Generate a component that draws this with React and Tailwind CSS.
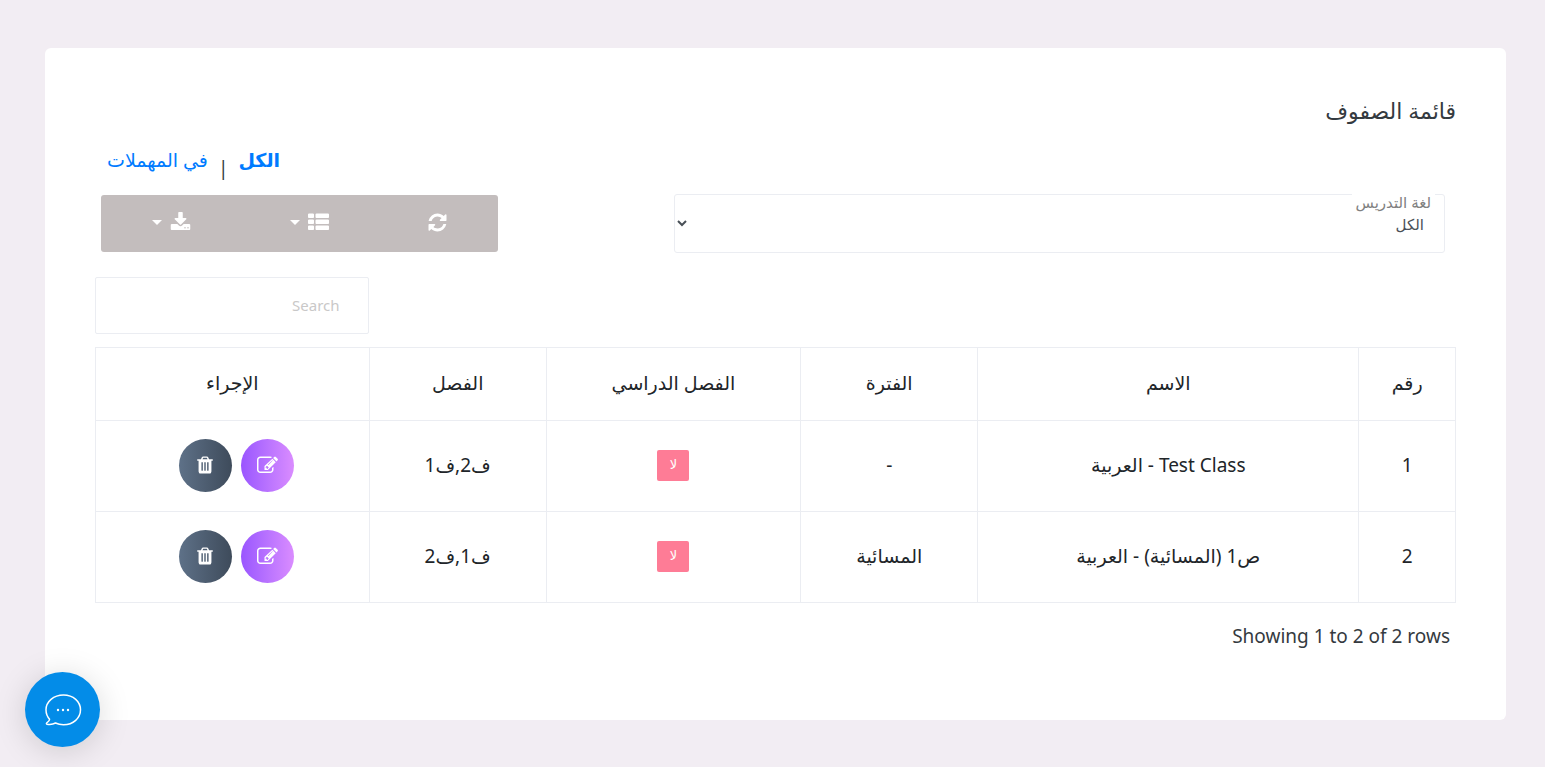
import React, { useState } from 'react';

const classes = [
  { no: 1, name: 'Test Class - العربية', shift: '-', semester: 'لا', section: 'ف2,ف1' },
  { no: 2, name: 'ص1 (المسائية) - العربية', shift: 'المسائية', semester: 'لا', section: 'ف1,ف2' },
];

const columns = [
  { label: 'رقم', width: 'w-[7.1%]' },
  { label: 'الاسم', width: 'w-[28%]' },
  { label: 'الفترة', width: 'w-[13%]' },
  { label: 'الفصل الدراسي', width: 'w-[18.7%]' },
  { label: 'الفصل', width: 'w-[13%]' },
  { label: 'الإجراء', width: 'w-[20.1%]' },
];

const icons = {
  refresh:
    'M1639 1056q0 5-1 7-64 268-268 434.500T892 1664q-146 0-282.500-55T366 1452l-129 129q-19 19-45 19t-45-19-19-45v-448q0-26 19-45t45-19h448q26 0 45 19t19 45-19 45l-137 137q71 66 161 102t187 36q134 0 250-65t186-179q11-17 53-117 8-23 30-23h192q13 0 22.500 9.500t9.500 22.500zm25-800v448q0 26-19 45t-45 19h-448q-26 0-45-19t-19-45 19-45l138-138Q1097 384 896 384q-134 0-250 65T460 628q-11 17-53 117-8 23-30 23H178q-13 0-22.500-9.500T146 736v-7q65-268 270-434.500T896 128q146 0 284 55.500T1425 340l130-129q19-19 45-19t45 19 19 45z',
  list: 'M512 1248v192q0 40-28 68t-68 28H96q-40 0-68-28t-28-68v-192q0-40 28-68t68-28h320q40 0 68 28t28 68zm0-512v192q0 40-28 68t-68 28H96q-40 0-68-28T0 928V736q0-40 28-68t68-28h320q40 0 68 28t28 68zm1280 512v192q0 40-28 68t-68 28H736q-40 0-68-28t-28-68v-192q0-40 28-68t68-28h960q40 0 68 28t28 68zM512 224v192q0 40-28 68t-68 28H96q-40 0-68-28T0 416V224q0-40 28-68t68-28h320q40 0 68 28t28 68zm1280 512v192q0 40-28 68t-68 28H736q-40 0-68-28t-28-68V736q0-40 28-68t68-28h960q40 0 68 28t28 68zm0-512v192q0 40-28 68t-68 28H736q-40 0-68-28t-28-68V224q0-40 28-68t68-28h960q40 0 68 28t28 68z',
  download:
    'M1344 1344q0-26-19-45t-45-19-45 19-19 45 19 45 45 19 45-19 19-45zm256 0q0-26-19-45t-45-19-45 19-19 45 19 45 45 19 45-19 19-45zm128-224v320q0 40-28 68t-68 28H160q-40 0-68-28t-28-68v-320q0-40 28-68t68-28h465l135 136q58 56 136 56t136-56l136-136h464q40 0 68 28t28 68zm-325-569q17 41-14 70l-448 448q-18 19-45 19t-45-19L403 621q-31-29-14-70 17-39 59-39h256V64q0-26 19-45t45-19h256q26 0 45 19t19 45v448h256q42 0 59 39z',
  edit: 'M888 1184l116-116-152-152-116 116v56h96v96h56zm440-720q-16-16-33 1L945 815q-17 17-1 33t33-1l350-350q17-17 1-33zm80 594v190q0 119-84.500 203.500T1120 1536H288q-119 0-203.500-84.500T0 1248V416q0-119 84.500-203.500T288 128h832q63 0 117 25 15 7 18 23 3 17-9 29l-49 49q-14 14-32 8-23-6-45-6H288q-66 0-113 47t-47 113v832q0 66 47 113t113 47h832q66 0 113-47t47-113v-126q0-13 9-22l64-64q15-15 35-7t20 29zm-96-738l288 288-672 672H640V928zm444 132l-92 92-288-288 92-92q28-28 68-28t68 28l152 152q28 28 28 68t-28 68z',
  trash:
    'M704 1376V672q0-14-9-23t-23-9h-64q-14 0-23 9t-9 23v704q0 14 9 23t23 9h64q14 0 23-9t9-23zm256 0V672q0-14-9-23t-23-9h-64q-14 0-23 9t-9 23v704q0 14 9 23t23 9h64q14 0 23-9t9-23zm256 0V672q0-14-9-23t-23-9h-64q-14 0-23 9t-9 23v704q0 14 9 23t23 9h64q14 0 23-9t9-23zM672 384h448l-48-117q-7-9-17-11H738q-10 2-17 11zm928 32v64q0 14-9 23t-23 9h-96v948q0 83-47 143.500t-113 60.500H480q-66 0-113-58.500T320 1464V512h-96q-14 0-23-9t-9-23v-64q0-14 9-23t23-9h309l70-167q15-37 54-63t79-26h320q40 0 79 26t54 63l70 167h309q14 0 23 9t9 23z',
};

const Icon = ({ name, className }) => (
  <svg viewBox="0 0 1792 1792" fill="currentColor" className={className} aria-hidden="true">
    <path d={icons[name]} />
  </svg>
);

const Caret = () => (
  <svg viewBox="0 0 10 5" fill="currentColor" className="w-[10px] h-[5px]" aria-hidden="true">
    <path d="M0 0h10L5 5z" />
  </svg>
);

const App = () => {
  const [search, setSearch] = useState('');
  const [medium, setMedium] = useState('all');

  return (
    <div
      dir="rtl"
      className="min-h-screen bg-[#f2edf3] pt-12 pb-[47px] pr-[39px] pl-[45px] font-['Noto_Sans','DejaVu_Sans',sans-serif] text-[#212529]"
    >
      <main className="rounded-md bg-white px-[50px] pt-12 pb-[68px]">
        <h1 className="text-[22px] leading-7 text-[#343a40]">قائمة الصفوف</h1>

        <nav className="mt-5 flex h-8 items-center justify-end gap-[10px] pl-3 text-[19px] text-[#007bff]">
          <a href="#all" className="font-bold">الكل</a>
          <span className="pt-4 text-[#343a40]">|</span>
          <a href="#trashed">في المهملات</a>
        </nav>

        <div className="mt-[18px] grid grid-cols-[771fr_397fr] items-center gap-[176px] pr-[11px] pl-[6px]">
          <div className="relative">
            <label
              htmlFor="medium"
              className="absolute top-0 right-[10px] bg-white px-1 text-[15px] leading-4 text-[#808080]"
            >
              لغة التدريس
            </label>
            <select
              id="medium"
              value={medium}
              onChange={(e) => setMedium(e.target.value)}
              className="block h-[59px] w-full rounded-[3px] border border-[#ebedf2] bg-white pr-4 pl-0.5 text-[15px] text-[#495057]"
            >
              <option value="all">الكل</option>
              <option value="ar">العربية</option>
            </select>
          </div>

          <div className="grid h-[57px] grid-cols-3 rounded-[3px] bg-[#c3bdbd] pb-0.5 text-white">
            <button type="button" aria-label="Refresh" className="flex items-center justify-center pl-3">
              <Icon name="refresh" className="size-[21px]" />
            </button>
            <button type="button" aria-label="Columns" className="flex items-center justify-center gap-2 pl-5">
              <Icon name="list" className="size-[21px]" />
              <Caret />
            </button>
            <button type="button" aria-label="Export" className="flex items-center justify-center gap-2 pl-2">
              <Icon name="download" className="size-[21px]" />
              <Caret />
            </button>
          </div>
        </div>

        <div className="mt-6 flex justify-end">
          <input
            type="search"
            aria-label="Search"
            placeholder="Search"
            value={search}
            onChange={(e) => setSearch(e.target.value)}
            className="h-[57px] w-[20.1%] rounded-[2px] border border-[#ebedf2] px-7 pb-0.5 text-[15px] placeholder:text-[#c9c8c8]"
          />
        </div>

        <table className="mt-[13px] w-full table-fixed border-collapse text-center text-[19px]">
          <thead>
            <tr className="h-[73px]">
              {columns.map((col) => (
                <th key={col.label} className={`${col.width} border border-[#ebedf2] pb-0.5 font-normal`}>
                  {col.label}
                </th>
              ))}
            </tr>
          </thead>
          <tbody>
            {classes.map((item) => (
              <tr key={item.no} className="h-[91px]">
                <td className="border border-[#ebedf2] pb-0.5">{item.no}</td>
                <td className="border border-[#ebedf2] pb-0.5">{item.name}</td>
                <td className="border border-[#ebedf2] pb-0.5">{item.shift}</td>
                <td className="border border-[#ebedf2] pb-0.5">
                  <span className="inline-flex h-[31px] w-8 items-center justify-center rounded-[2px] bg-[#fe7c96] align-middle text-[13px] text-white">
                    {item.semester}
                  </span>
                </td>
                <td className="border border-[#ebedf2] pb-0.5">{item.section}</td>
                <td className="border border-[#ebedf2] pb-0.5">
                  <div className="flex items-center justify-center gap-[9px] pl-2">
                    <button
                      type="button"
                      aria-label="Edit"
                      className="flex size-[53px] items-center justify-center rounded-full bg-linear-to-r from-[#9a55ff] to-[#da8cff] text-white"
                    >
                      <Icon name="edit" className="size-[21px]" />
                    </button>
                    <button
                      type="button"
                      aria-label="Delete"
                      className="flex size-[53px] items-center justify-center rounded-full bg-linear-to-r from-[#5e7188] to-[#3e4b5b] text-white"
                    >
                      <Icon name="trash" className="size-5" />
                    </button>
                  </div>
                </td>
              </tr>
            ))}
          </tbody>
        </table>

        <p className="mt-[17px] pr-[6px] text-right text-[19px] leading-8 text-[#343a40]">
          Showing 1 to 2 of 2 rows
        </p>
      </main>

      <button
        type="button"
        aria-label="Chat"
        className="fixed bottom-5 left-[25px] flex size-[75px] items-center justify-center rounded-full bg-[#038ce8] text-white shadow-[0_4px_32px_rgba(0,0,0,0.15)]"
      >
        <svg viewBox="0 0 38 34" className="h-[34px] w-[38px]" fill="none" stroke="currentColor" strokeWidth="1.5">
          <path
            d="M19.500 2C29.400 2 36.500 8.600 36.500 16.800S29.400 31.700 19.500 31.700c-3 0-5.600-.5-8-1.700-2.300 1.300-5 1.700-8.500 1.200-.7-.2-.8-.9-.2-1.300 1.700-1.100 2.700-2.300 2.800-3.700C3.200 23.700 2 20.400 2 16.800 2 8.600 9.600 2 19.500 2z"
            strokeLinejoin="round"
          />
          <g fill="currentColor" stroke="none">
            <circle cx="14" cy="17" r="1.200" />
            <circle cx="19" cy="17" r="1.200" />
            <circle cx="24" cy="17" r="1.200" />
          </g>
        </svg>
      </button>
    </div>
  );
};

export default App;
